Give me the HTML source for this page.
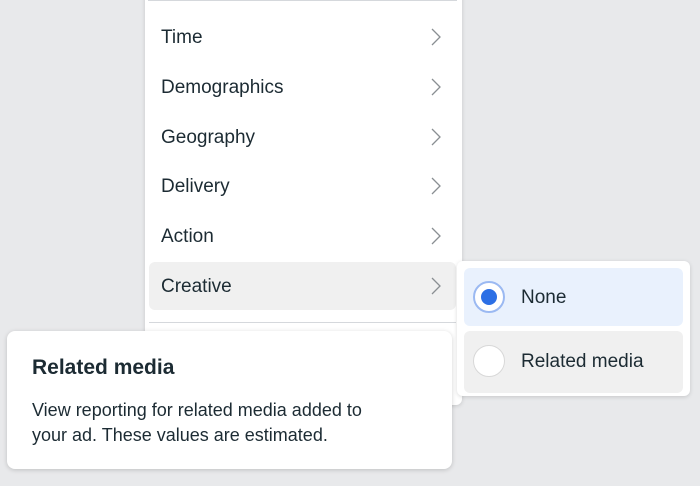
<!DOCTYPE html>
<html><head><style>
body{margin:0;width:700px;height:486px;background:#e8e9eb;font-family:"Liberation Sans",sans-serif;color:#1c2b33;position:relative;overflow:hidden}
.menu{position:absolute;left:145px;top:-10px;width:317px;height:415px;background:#fff;border-radius:6px;box-shadow:0 1px 4px rgba(0,0,0,.15)}
.topline{position:absolute;left:148px;top:0;width:309px;height:1px;background:#d5d8dc}
.row{position:absolute;left:149px;width:307px;height:48px;border-radius:6px;font-size:19px;line-height:50px}
.row span{position:absolute;left:12px}
.row svg{position:absolute;left:281px;top:14px}
.sel{background:#f0f0f0}
.div{position:absolute;left:149px;top:322px;width:307px;height:1px;background:#d5d8dc}
.tip{position:absolute;left:7px;top:331px;width:445px;height:138px;background:#fff;border-radius:8px;box-shadow:0 1px 5px rgba(0,0,0,.18)}
.tip h3{position:absolute;left:25px;top:25px;margin:0;font-size:21px;font-weight:bold}
.tip p{position:absolute;left:25px;top:67px;margin:0;font-size:18px;line-height:25px;width:360px}
.sub{position:absolute;left:457px;top:261px;width:233px;height:135px;background:#fff;border-radius:6px;box-shadow:0 1px 4px rgba(0,0,0,.15)}
.opt{position:absolute;left:7px;width:219px;border-radius:6px;font-size:19px}
.opt .r{position:absolute;left:9px;width:32px;height:32px;border-radius:50%;background:#fff;box-sizing:border-box}
.opt span{position:absolute;left:57px}
</style></head><body>
<div class="menu"></div>
<div class="topline"></div>
<div class="row" style="top:13px"><span>Time</span><svg width="12" height="20"><path d="M2 2l8 8-8 8" fill="none" stroke="#8a8f93" stroke-width="1.3"/></svg></div>
<div class="row" style="top:63px"><span>Demographics</span><svg width="12" height="20"><path d="M2 2l8 8-8 8" fill="none" stroke="#8a8f93" stroke-width="1.3"/></svg></div>
<div class="row" style="top:113px"><span>Geography</span><svg width="12" height="20"><path d="M2 2l8 8-8 8" fill="none" stroke="#8a8f93" stroke-width="1.3"/></svg></div>
<div class="row" style="top:162px"><span>Delivery</span><svg width="12" height="20"><path d="M2 2l8 8-8 8" fill="none" stroke="#8a8f93" stroke-width="1.3"/></svg></div>
<div class="row" style="top:212px"><span>Action</span><svg width="12" height="20"><path d="M2 2l8 8-8 8" fill="none" stroke="#8a8f93" stroke-width="1.3"/></svg></div>
<div class="row sel" style="top:262px"><span>Creative</span><svg width="12" height="20"><path d="M2 2l8 8-8 8" fill="none" stroke="#8a8f93" stroke-width="1.3"/></svg></div>
<div class="div"></div>
<div class="sub">
<div class="opt" style="top:7px;height:58px;background:#e9f1fd"><div class="r" style="top:13px;border:2px solid #9bb9f2;"><div style="position:absolute;left:6px;top:6px;width:16px;height:16px;border-radius:50%;background:#2c6fe5"></div></div><span style="top:19px">None</span></div>
<div class="opt" style="top:70px;height:62px;background:#f0f0f0"><div class="r" style="top:14px;border:1px solid #d8d8d8"></div><span style="top:20px">Related media</span></div>
</div>
<div class="tip"><h3>Related media</h3><p>View reporting for related media added to your ad. These values are estimated.</p></div>
</body></html>
